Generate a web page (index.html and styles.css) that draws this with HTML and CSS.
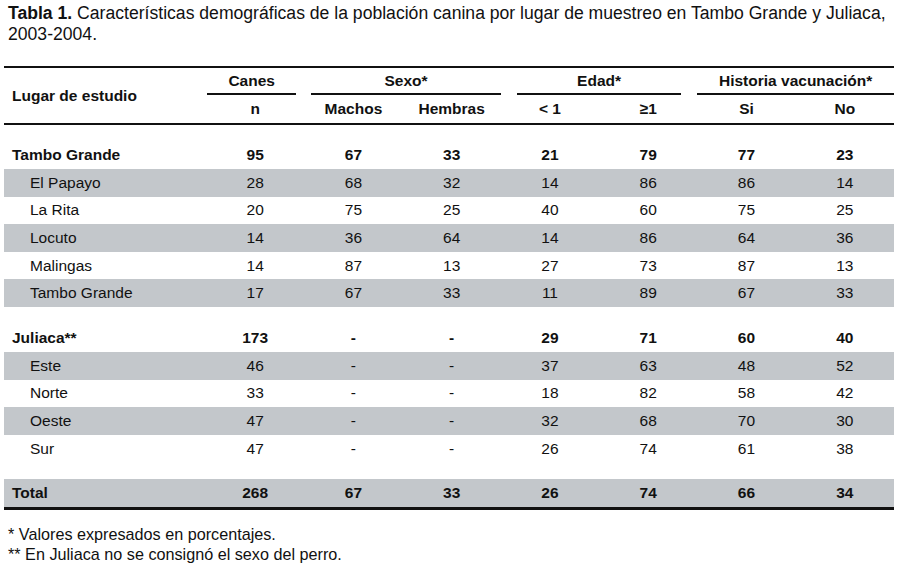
FILE: index.html
```html
<!DOCTYPE html>
<html lang="es">
<head>
<meta charset="utf-8">
<title>Tabla 1</title>
<link rel="stylesheet" href="styles.css">
</head>
<body>
<p class="caption"><b>Tabla 1.</b> Características demográficas de la población canina por lugar de muestreo en Tambo Grande y Juliaca, 2003-2004.</p>
<table class="data">
  <colgroup>
    <col class="c-label">
    <col class="c-num"><col class="c-num"><col class="c-num"><col class="c-num"><col class="c-num"><col class="c-num"><col class="c-num">
  </colgroup>
  <thead>
    <tr class="h1">
      <th rowspan="2" class="lbl">Lugar de estudio</th>
      <th><div class="grp g-canes">Canes</div></th>
      <th colspan="2"><div class="grp g-sexo">Sexo*</div></th>
      <th colspan="2"><div class="grp g-edad">Edad*</div></th>
      <th colspan="2"><div class="grp g-hist">Historia vacunación*</div></th>
    </tr>
    <tr class="h2">
      <th>n</th><th>Machos</th><th>Hembras</th><th>&lt; 1</th><th>≥1</th><th>Si</th><th>No</th>
    </tr>
  </thead>
  <tbody>
    <tr class="gap g1"><td colspan="8"></td></tr>
    <tr class="grp-row"><td class="lbl">Tambo Grande</td><td>95</td><td>67</td><td>33</td><td>21</td><td>79</td><td>77</td><td>23</td></tr>
    <tr class="sub shade"><td class="lbl">El Papayo</td><td>28</td><td>68</td><td>32</td><td>14</td><td>86</td><td>86</td><td>14</td></tr>
    <tr class="sub"><td class="lbl">La Rita</td><td>20</td><td>75</td><td>25</td><td>40</td><td>60</td><td>75</td><td>25</td></tr>
    <tr class="sub shade"><td class="lbl">Locuto</td><td>14</td><td>36</td><td>64</td><td>14</td><td>86</td><td>64</td><td>36</td></tr>
    <tr class="sub"><td class="lbl">Malingas</td><td>14</td><td>87</td><td>13</td><td>27</td><td>73</td><td>87</td><td>13</td></tr>
    <tr class="sub shade"><td class="lbl">Tambo Grande</td><td>17</td><td>67</td><td>33</td><td>11</td><td>89</td><td>67</td><td>33</td></tr>
    <tr class="gap"><td colspan="8"></td></tr>
    <tr class="grp-row"><td class="lbl">Juliaca**</td><td>173</td><td>-</td><td>-</td><td>29</td><td>71</td><td>60</td><td>40</td></tr>
    <tr class="sub shade"><td class="lbl">Este</td><td>46</td><td>-</td><td>-</td><td>37</td><td>63</td><td>48</td><td>52</td></tr>
    <tr class="sub"><td class="lbl">Norte</td><td>33</td><td>-</td><td>-</td><td>18</td><td>82</td><td>58</td><td>42</td></tr>
    <tr class="sub shade"><td class="lbl">Oeste</td><td>47</td><td>-</td><td>-</td><td>32</td><td>68</td><td>70</td><td>30</td></tr>
    <tr class="sub"><td class="lbl">Sur</td><td>47</td><td>-</td><td>-</td><td>26</td><td>74</td><td>61</td><td>38</td></tr>
    <tr class="gap"><td colspan="8"></td></tr>
    <tr class="total shade"><td class="lbl">Total</td><td>268</td><td>67</td><td>33</td><td>26</td><td>74</td><td>66</td><td>34</td></tr>
  </tbody>
</table>
<div class="notes">
  <p>* Valores expresados en porcentajes.</p>
  <p>** En Juliaca no se consignó el sexo del perro.</p>
</div>
</body>
</html>
```
FILE: styles.css
```css
html, body {
  margin: 0;
  padding: 0;
  background: #fff;
}
body {
  font-family: "Liberation Sans", Arial, sans-serif;
  color: #111;
  width: 900px;
}
.caption {
  margin: 0;
  padding: 3px 8px 0 8px;
  font-size: 17.6px;
  line-height: 21px;
}
.caption b { font-weight: bold; }

.data {
  margin: 21px 0 0 4px;
  width: 890px;
  border-collapse: separate;
  border-spacing: 0;
  table-layout: fixed;
  font-size: 15.5px;
}
.c-label { width: 202px; }
.c-num { width: 98.28px; }

.data th, .data td {
  padding: 0;
  text-align: center;
  white-space: nowrap;
}
.data thead th {
  font-weight: bold;
  border-top: 2px solid #111;
}
.data thead tr.h1 th { vertical-align: bottom; }
.data thead tr.h2 th {
  border-top: 0;
  border-bottom: 2px solid #111;
  height: 28px;
  vertical-align: middle;
}
.data thead tr.h1 th.lbl {
  text-align: left;
  padding-left: 8px;
  border-bottom: 2px solid #111;
  vertical-align: middle;
  padding-top: 1px;
}
.grp {
  line-height: 25px;
  border-bottom: 2px solid #111;
}
.g-canes { margin: 0 8px 0 1px; }
.g-sexo { margin: 0 0 0 7px; }
.g-edad { margin: 0 16px 0 16px; }
.g-hist { margin: 0; }

.data tbody td { line-height: 18px; vertical-align: middle; }
.gap td { height: 17px; }
.gap.g1 td { height: 16px; }
.grp-row td { height: 28px; font-weight: bold; }
.grp-row td.lbl { text-align: left; padding-left: 8px; }
.sub td { height: 27.6px; }
.sub td.lbl { text-align: left; padding-left: 26px; }
.shade td { background: #c3c7cb; }
.total td {
  height: 27.4px;
  font-weight: bold;
  border-bottom: 3px solid #111;
}
.total td.lbl { text-align: left; padding-left: 8px; }

.notes {
  margin-top: 14px;
  padding-left: 8px;
  font-size: 16.2px;
  line-height: 20px;
}
.notes p { margin: 0; }
```
